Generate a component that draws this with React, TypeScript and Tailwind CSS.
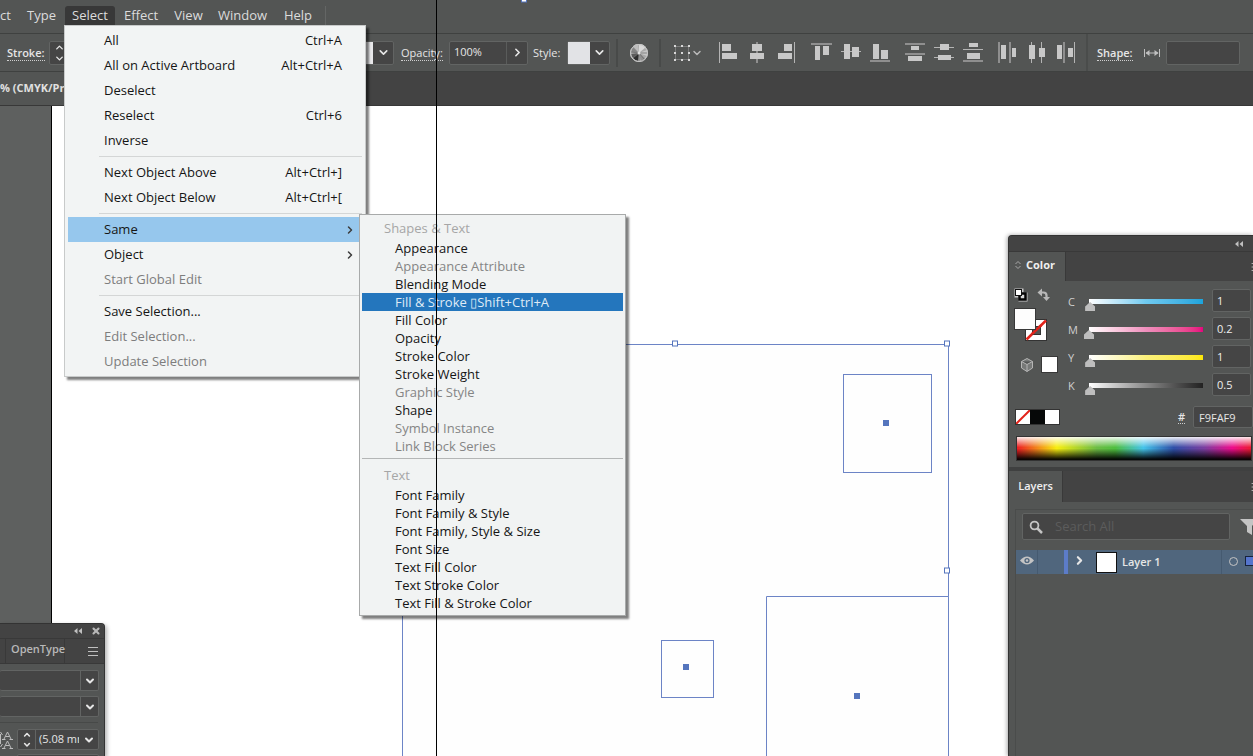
import React from "react";
import { ChevronDown, ChevronRight, ChevronUp, Menu, X } from "lucide-react";

type Rect = [number, number, number, number];

const alignGroups: { label: string; rects: Rect[] }[][] = [
  [
    { label: "Horizontal Align Left", rects: [[1, 0, 1, 21], [4, 2, 9, 7], [4, 11, 15, 6]] },
    { label: "Horizontal Align Center", rects: [[9, 0, 2, 21], [5, 2, 10, 7], [3, 11, 14, 6]] },
    { label: "Horizontal Align Right", rects: [[18, 0, 1, 21], [8, 2, 8, 7], [2, 11, 14, 6]] },
  ],
  [
    { label: "Vertical Align Top", rects: [[0, 1, 21, 2], [4, 4, 5, 14], [12, 4, 6, 9]] },
    { label: "Vertical Align Center", rects: [[1, 9, 20, 1], [4, 2, 6, 15], [12, 5, 7, 10]] },
    { label: "Vertical Align Bottom", rects: [[1, 18, 20, 2], [4, 2, 6, 15], [12, 8, 7, 9]] },
  ],
  [
    { label: "Vertical Distribute Top", rects: [[1, 1, 20, 2], [7, 4, 8, 4], [1, 11, 20, 2], [4, 14, 14, 5]] },
    { label: "Vertical Distribute Center", rects: [[1, 5, 20, 1], [7, 2, 9, 6], [1, 15, 20, 1], [5, 13, 13, 5]] },
    { label: "Vertical Distribute Bottom", rects: [[7, 1, 9, 4], [1, 7, 20, 1], [5, 11, 13, 6], [1, 18, 20, 2]] },
  ],
  [
    { label: "Horizontal Distribute Left", rects: [[1, 0, 2, 21], [4, 3, 5, 14], [12, 0, 2, 21], [15, 6, 4, 9]] },
    { label: "Horizontal Distribute Center", rects: [[5, 0, 1, 21], [3, 3, 6, 14], [15, 0, 1, 21], [13, 6, 6, 9]] },
    { label: "Horizontal Distribute Right", rects: [[2, 3, 5, 14], [8, 0, 2, 21], [13, 6, 5, 9], [19, 0, 1, 21]] },
  ],
];

type Item = { text: string; keys?: string; off?: boolean; sub?: boolean; active?: boolean };

const selectMenu: Item[][] = [
  [
    { text: "All", keys: "Ctrl+A" },
    { text: "All on Active Artboard", keys: "Alt+Ctrl+A" },
    { text: "Deselect" },
    { text: "Reselect", keys: "Ctrl+6" },
    { text: "Inverse" },
  ],
  [
    { text: "Next Object Above", keys: "Alt+Ctrl+]" },
    { text: "Next Object Below", keys: "Alt+Ctrl+[" },
  ],
  [
    { text: "Same", sub: true, active: true },
    { text: "Object", sub: true },
    { text: "Start Global Edit", off: true },
  ],
  [
    { text: "Save Selection..." },
    { text: "Edit Selection...", off: true },
    { text: "Update Selection", off: true },
  ],
];

const sameMenu: { title: string; items: Item[] }[] = [
  {
    title: "Shapes & Text",
    items: [
      { text: "Appearance" },
      { text: "Appearance Attribute", off: true },
      { text: "Blending Mode" },
      { text: "Fill & Stroke ▯Shift+Ctrl+A", active: true },
      { text: "Fill Color" },
      { text: "Opacity" },
      { text: "Stroke Color" },
      { text: "Stroke Weight" },
      { text: "Graphic Style", off: true },
      { text: "Shape" },
      { text: "Symbol Instance", off: true },
      { text: "Link Block Series", off: true },
    ],
  },
  {
    title: "Text",
    items: [
      { text: "Font Family" },
      { text: "Font Family & Style" },
      { text: "Font Family, Style & Size" },
      { text: "Font Size" },
      { text: "Text Fill Color" },
      { text: "Text Stroke Color" },
      { text: "Text Fill & Stroke Color" },
    ],
  },
];

const channels = [
  { name: "C", value: "1", pos: 1, track: "from-white via-[#6fcaf0] to-[#1ba4dc]" },
  { name: "M", value: "0.2", pos: 0, track: "from-white via-[#ee8fbd] to-[#e5007e]" },
  { name: "Y", value: "1", pos: 1, track: "from-white via-[#fbf07a] to-[#fce800]" },
  { name: "K", value: "0.5", pos: 1, track: "from-white via-[#8a8a8a] to-[#222222]" },
];

function MenuBar() {
  return (
    <nav className="flex h-[34px] shrink-0 items-start overflow-hidden border-b border-[#3f4140] bg-[#535554] pt-[6px] text-[13px] leading-[18px] text-[#dcdcdc]">
      <button className="w-[19px] text-left">ct</button>
      <button className="w-[45px]">Type</button>
      <button className="ml-px h-[28px] w-[50px] rounded-t-[3px] bg-[#383838] pb-[10px]">Select</button>
      <button className="w-[52px]">Effect</button>
      <button className="w-[43px]">View</button>
      <button className="w-[65px]">Window</button>
      <button className="w-[46px]">Help</button>
      <span className="ml-[4px] h-[26px] w-px bg-[#646665]" />
    </nav>
  );
}

const field = "rounded-[2px] border border-[#626463] bg-[#454545]";

function ControlBar() {
  return (
    <div className="flex h-[38px] shrink-0 items-center border-b border-[#3f4140] bg-[#535554] text-[11px] text-[#e6e6e6]">
      <div className="w-[49px] shrink-0 pl-[7px] pt-[2px]">
        <label htmlFor="stroke" className="border-b border-dotted border-[#cfcfcf] font-semibold leading-[14px]">Stroke:</label>
      </div>
      <div className="flex w-[301px] shrink-0">
        <div className={`${field} flex h-[24px]`}>
          <button aria-label="Change stroke weight" className="flex w-[18px] flex-col items-center justify-center">
            <ChevronUp size={13} strokeWidth={3} />
            <ChevronDown size={13} strokeWidth={3} />
          </button>
          <input id="stroke" className="w-[60px] bg-transparent px-1" defaultValue="" />
        </div>
      </div>
      <button aria-label="Brush definition" className={`${field} flex h-[24px] w-[44px] shrink-0 items-center`}>
        <span className="h-full w-[22px] bg-[#e8e8ea]" />
        <ChevronDown className="mx-auto" size={13} strokeWidth={3} />
      </button>
      <div className="w-[55px] shrink-0 pl-[7px] pt-[2px]">
        <label htmlFor="opacity" className="border-b border-dotted border-[#cfcfcf] font-medium leading-[14px]">Opacity:</label>
      </div>
      <div className={`${field} flex h-[24px] w-[79px] shrink-0`}>
        <input id="opacity" defaultValue="100%" className="w-[57px] border-r border-[#5a5c5b] bg-transparent pl-[4px] text-[11px] outline-none" />
        <button aria-label="Opacity slider" className="flex flex-1 items-center justify-center">
          <ChevronRight size={13} strokeWidth={3} />
        </button>
      </div>
      <span className="w-[39px] shrink-0 pl-[5px] pt-[2px]">Style:</span>
      <button aria-label="Graphic style" className={`${field} flex h-[24px] w-[43px] shrink-0 items-center`}>
        <span className="h-full w-[22px] bg-[#e2e3e6]" />
        <ChevronDown className="mx-auto" size={13} strokeWidth={3} />
      </button>
      <span className="ml-[6px] h-[28px] w-[2px] shrink-0 bg-[#484a49]" />
      <button aria-label="Recolor artwork" className="ml-[11px] shrink-0">
        <svg width="20" height="20" viewBox="0 0 20 20">
          <circle cx="10" cy="10" r="8.500" fill="#a9a9a9" stroke="#cdcdcd" />
          <path d="M10 10L10 1A9 9 0 0 1 17 4Z" fill="#d9d9d9" />
          <path d="M10 10L18 7A9 9 0 0 1 18 13Z" fill="#c6c6c6" />
          <path d="M10 10L17 16A9 9 0 0 1 12 19Z" fill="#8f8f8f" />
          <path d="M10 10L9 18A8 8 0 0 1 4 15Z" fill="#2e2e2e" />
          <path d="M10 10L4 15A8 8 0 0 1 2 11Z" fill="#5b5b5b" />
          <path d="M10 10L2 9A8 8 0 0 1 4 4Z" fill="#858585" />
          <path d="M10 10L4 3A9 9 0 0 1 9 1Z" fill="#bdbdbd" />
          <path d="M10 10V18M10 10L15 16M10 10H18M10 10L4 15M10 10L2 9" stroke="#666" strokeWidth=".7" />
          <circle cx="10" cy="10" r="8.500" fill="none" stroke="#c2c2c2" />
          <circle cx="10" cy="10" r="1.500" fill="#e2e2e2" />
        </svg>
      </button>
      <span className="ml-[10px] h-[28px] w-[2px] shrink-0 bg-[#484a49]" />
      <button aria-label="Transform" className="ml-[12px] flex shrink-0 items-center">
        <svg width="18" height="18" viewBox="0 0 18 18">
          <rect x="2.500" y="2.500" width="13" height="13" fill="none" stroke="#a5a5a5" strokeDasharray="1 1" />
          <path d="M1 1h2v2H1zM8 1h2v2H8zM15 1h2v2h-2zM1 8h2v2H1zM15 8h2v2h-2zM1 15h2v2H1zM8 15h2v2H8zM15 15h2v2h-2zM8 8h2v2H8z" fill="#d8d8d8" />
        </svg>
        <ChevronDown size={12} strokeWidth={3} color="#b8b8b8" />
      </button>
      <div className="ml-[15px] flex shrink-0 gap-[13px]">
        {alignGroups.map((group, i) => (
          <div key={i} className="flex gap-[7px]">
            {group.map((icon) => (
              <button key={icon.label} aria-label={icon.label}>
                <svg width="22" height="22" viewBox="0 0 22 22" className="block">
                  {icon.rects.map(([x, y, w, h], n) => (
                    <rect key={n} x={x} y={y} width={w} height={h} fill={w === 2 || h === 2 ? "#8f8f8f" : w < 3 || h < 3 ? "#b4b4b4" : "#c8c8c8"} />
                  ))}
                </svg>
              </button>
            ))}
          </div>
        ))}
      </div>
      <span className="ml-[9px] h-full w-[2px] shrink-0 bg-[#4a4c4b]" />
      <div className="w-[55px] shrink-0 pl-[9px] pt-[2px]">
        <label htmlFor="shape" className="border-b border-dotted border-[#cfcfcf] font-semibold leading-[14px]">Shape:</label>
      </div>
      <svg width="18" height="12" viewBox="0 0 18 12" className="mr-[5px] shrink-0">
        <path d="M1.500 2v8M16.500 2v8M3 6h12" fill="none" stroke="#c0c0c0" />
        <path d="M2.500 6l4-3v6zM15.500 6l-4-3v6z" fill="#c0c0c0" />
      </svg>
      <input id="shape" className={`${field} h-[24px] w-[74px] shrink-0 px-1 outline-none`} />
    </div>
  );
}

function SelectMenu() {
  return (
    <div role="menu" className="absolute left-[64px] top-[25px] w-[302px] border border-[#c8caca] bg-[#f2f4f4] px-[3px] py-[2px] text-[13px] leading-[25px] text-[#151515] shadow-[3px_3px_2px_rgba(0,0,0,0.5)]">
      {selectMenu.map((group, i) => (
        <div key={i} className="flex flex-col">
          {i > 0 && <hr className="my-[3px] ml-[31px] border-[#d4d6d6]" />}
          {group.map((item) => (
            <button
              key={item.text}
              role="menuitem"
              disabled={item.off}
              className={`flex h-[25px] items-center justify-between pl-[36px] ${item.sub ? "pr-[6px]" : "pr-[20px]"} ${item.active ? "bg-[#96c7ed]" : ""} ${item.off ? "text-[#7d7d7d]" : ""}`}
            >
              <span>{item.text}</span>
              {item.keys && <span>{item.keys}</span>}
              {item.sub && <ChevronRight size={12} strokeWidth={3} color="#3c3c3c" />}
            </button>
          ))}
        </div>
      ))}
    </div>
  );
}

function SameMenu() {
  return (
    <div role="menu" className="absolute left-[359px] top-[214px] w-[267px] border border-[#a8aaaa] bg-[#f1f3f3] px-[2px] pb-[3px] pt-[4px] text-[13px] leading-[18px] text-[#151515] shadow-[3px_3px_2px_rgba(0,0,0,0.5)]">
      {sameMenu.map((group, i) => (
        <div key={group.title} className="flex flex-col">
          {i > 0 && <hr className="mb-[7px] mt-[3px] border-[#b4b6b6]" />}
          <span className="mb-[2px] pl-[22px] text-[#a6a6a6]">{group.title}</span>
          {group.items.map((item) => (
            <button
              key={item.text}
              role="menuitem"
              disabled={item.off}
              className={`h-[18px] pl-[33px] text-left ${item.active ? "bg-[#2476bd] text-[#dfeaf6]" : ""} ${item.off ? "text-[#858585]" : ""}`}
            >
              {item.text}
            </button>
          ))}
        </div>
      ))}
    </div>
  );
}

function Artwork() {
  const handles = [[524.5, -0.5], [675.5, 343.5], [947.5, 343.5], [947.5, 570.5]];
  const centers = [[886, 423], [857, 696], [686, 667]];
  return (
    <svg className="absolute inset-0 h-full w-full" aria-label="Artboard selection">
      <g fill="#fefefe" stroke="#6c84c6" strokeWidth="1">
        <path d="M402.500 800V344.500H948.500V800" />
        <rect x="843.500" y="374.500" width="88" height="98" />
        <path d="M766.500 800V596.500H948.500V800" />
        <rect x="661.500" y="640.500" width="52" height="57" />
      </g>
      {handles.map(([x, y]) => (
        <rect key={`${x}-${y}`} x={x - 3} y={y - 3} width="5" height="5" transform="translate(0 .5)" fill="#fff" stroke="#5575bd" />
      ))}
      {centers.map(([x, y]) => (
        <rect key={`${x}-${y}`} x={x - 3} y={y - 3} width="6" height="6" fill="#5575bd" />
      ))}
    </svg>
  );
}

function CollapseIcon() {
  return (
    <svg width="8" height="6" viewBox="0 0 8 6">
      <path d="M3.500 0v6L0 3zM8 0v6L4.500 3z" fill="#c0c0c0" />
    </svg>
  );
}

function ColorPanel() {
  return (
    <section className="flex flex-col">
      <div className="flex h-[30px] items-stretch border-t border-[#393939] bg-[#434343]">
        <h2 className="flex w-[57px] items-center gap-[4px] border-r border-[#393939] bg-[#535554] pb-[3px] pl-[5px] text-[11px] font-bold text-[#efefef]">
          <svg width="8" height="10" viewBox="0 0 8 10">
            <path d="M1.500 4L4 1.500L6.500 4M1.500 6L4 8.500L6.500 6" fill="none" stroke="#a8a8a8" />
          </svg>
          Color
        </h2>
        <button aria-label="Color panel menu" className="ml-auto flex items-center">
          <Menu size={12} color="#b0b0b0" className="-mr-[9px]" />
        </button>
      </div>
      <div className="flex pl-[5px] pt-[7px]">
        <div className="flex w-[49px] shrink-0 flex-col">
          <div className="flex gap-[8px]">
            <button aria-label="Default fill and stroke">
              <svg width="15" height="14" viewBox="0 0 15 14" className="block">
                <path d="M.500 .500h9v4h4v9h-9v-4h-4z" fill="#c9c9c9" />
                <path d="M5.500 5.500h6v6h-6z" fill="#d8d8d8" stroke="#050505" strokeWidth="2.500" />
                <rect x="1.500" y="1.500" width="6" height="6" fill="#fff" stroke="#111" />
              </svg>
            </button>
            <button aria-label="Swap fill and stroke">
              <svg width="14" height="14" viewBox="0 0 14 14" className="block">
                <path d="M4 4.500h2.500q3 0 3 3v2" fill="none" stroke="#b8b8b8" strokeWidth="2.200" />
                <path d="M.500 4.500l4.500-4v8zM6 9h7L9.500 13z" fill="#b8b8b8" />
              </svg>
            </button>
          </div>
          <svg width="34" height="34" viewBox="0 0 34 34" className="mt-[6px] block" role="img" aria-label="Fill white, no stroke">
            <rect x="11.500" y="11.500" width="21" height="21" fill="#fff" stroke="#333" />
            <path d="M12.500 31.500L32 12.500" stroke="#e2231a" strokeWidth="2.500" />
            <rect x="18.500" y="18.500" width="8" height="8" fill="#535554" stroke="#333" />
            <path d="M18 26.200L27 17.400" stroke="#e2231a" strokeWidth="2.500" />
            <rect x=".500" y=".500" width="21" height="21" fill="#fdfdfd" stroke="#383838" />
          </svg>
          <div className="mt-[14px] flex items-center gap-[7px] pl-[6px]">
            <svg width="14" height="16" viewBox="0 0 14 16">
              <path d="M7 1.500l5.500 3v6.500L7 14.500l-5.500-3.500V4.500zM1.500 4.500L7 7.500L12.500 4.500M7 7.500V14.500" fill="#777978" stroke="#b5b5b5" strokeLinejoin="round" />
            </svg>
            <span className="h-[17px] w-[17px] shrink-0 border border-[#383838] bg-white" />
          </div>
        </div>
        <div className="flex flex-1 flex-col gap-[5px] pt-px">
          {channels.map((c) => (
            <div key={c.name} className="flex h-[23px] items-center">
              <label htmlFor={`slider-${c.name}`} className="w-[21px] pl-[5px] pt-[4px] text-[11px] text-[#cfcfcf]">{c.name}</label>
              <input
                id={`slider-${c.name}`}
                type="range"
                min={0}
                max={100}
                defaultValue={c.pos}
                className={`mt-[9px] block h-[14px] w-[124px] shrink-0 appearance-none bg-linear-to-r bg-[length:114px_5px] bg-[position:5px_1px] bg-no-repeat ${c.track} [&::-webkit-slider-runnable-track]:h-[14px] [&::-webkit-slider-thumb]:mt-[4px] [&::-webkit-slider-thumb]:h-[9px] [&::-webkit-slider-thumb]:w-[10px] [&::-webkit-slider-thumb]:appearance-none [&::-webkit-slider-thumb]:bg-[#bebebe] [&::-webkit-slider-thumb]:[clip-path:polygon(50%_0,100%_50%,100%_100%,0_100%,0_50%)]`}
              />
              <input aria-label={`${c.name} value`} defaultValue={c.value} className={`${field} ml-[4px] h-[23px] w-[39px] pl-[4px] text-[11px] text-[#efefef] outline-none`} />
            </div>
          ))}
        </div>
      </div>
      <div className="mt-[10px] flex h-[22px] items-center pl-[6px]">
        <div className="flex h-[16px] shrink-0 border border-[#333]">
          <svg width="14" height="14" viewBox="0 0 14 14">
            <rect width="14" height="14" fill="#fff" />
            <path d="M0 14L14 0" stroke="#e2231a" strokeWidth="2" />
          </svg>
          <span className="w-[15px] bg-[#060808]" />
          <span className="w-[14px] bg-white" />
        </div>
        <label htmlFor="hex" className="ml-auto mr-[8px] border-b border-dotted border-[#cfcfcf] text-[11px] font-semibold leading-[13px] text-[#e6e6e6]">#</label>
        <input id="hex" defaultValue="F9FAF9" className={`${field} h-[22px] w-[60px] pl-[5px] text-[11px] text-[#e6e6e6] outline-none`} />
      </div>
      <div className="mb-[6px] ml-[7px] mr-px mt-[8px] h-[25px] border border-[#333] bg-[linear-gradient(to_bottom,rgba(255,255,255,0.9),rgba(255,255,255,0)_45%,rgba(0,0,0,0)_50%,rgba(0,0,0,0.95)_96%),linear-gradient(to_right,#ec1c24,#f7ee10_17%,#6dbd45_34%,#4fbf3f_42%,#45c4ea_54%,#2f4fa8_67%,#7a3fa0_80%,#ed0c8c_92%,#ec1c30)]" />
    </section>
  );
}

function LayersPanel() {
  return (
    <section className="flex flex-1 flex-col border-t-4 border-[#3f4040]">
      <div className="flex h-[31px] bg-[#434343]">
        <h2 className="flex w-[54px] items-center justify-center border-r border-[#393939] bg-[#535554] text-[11px] font-semibold text-[#efefef]">Layers</h2>
        <button aria-label="Layers panel menu" className="ml-auto flex items-center">
          <Menu size={12} color="#b0b0b0" className="-mr-[9px]" />
        </button>
      </div>
      <div className="ml-[6px] mt-[7px] flex flex-1 flex-col border-l border-t border-[#4a4c4b]">
        <div className="flex items-center py-[3px] pl-[6px]">
          <div className={`${field} flex h-[27px] w-[208px] shrink-0 items-center`}>
            <svg width="14" height="14" viewBox="0 0 14 14" className="ml-[6px]">
              <circle cx="5.500" cy="5.500" r="3.900" fill="none" stroke="#c4c4c4" strokeWidth="1.800" />
              <path d="M8.500 8.500L13 13" stroke="#c4c4c4" strokeWidth="2.500" />
            </svg>
            <input aria-label="Search layers" placeholder="Search All" className="min-w-0 flex-1 bg-transparent pl-[12px] text-[13px] outline-none placeholder:text-[#5c5c5c]" />
          </div>
          <button aria-label="Filter" className="ml-[10px] shrink-0">
            <svg width="18" height="18" viewBox="0 0 18 18" className="block">
              <path d="M0 1h18l-6 7v9l-5-3V8z" fill="#c4c4c4" />
            </svg>
          </button>
        </div>
        <div className="mt-[7px] flex h-[24px] items-stretch bg-[#50667d] text-[11px] text-[#e6e6e6]">
          <button aria-label="Toggle visibility" className="flex w-[22px] items-center justify-center border-r border-[#455a70] pb-[3px]">
            <svg width="14" height="9" viewBox="0 0 14 9">
              <path d="M0 4.500Q7-3.500 14 4.500Q7 12.500 0 4.500z" fill="#c4c4c4" />
              <circle cx="7" cy="4.500" r="2.600" fill="#50667d" />
              <circle cx="7" cy="4.500" r="1.200" fill="#c4c4c4" />
            </svg>
          </button>
          <span className="ml-[26px] w-[4px] bg-[#5c7cc8]" />
          <button aria-label="Expand layer" className="flex w-[23px] items-center justify-center pb-[3px]">
            <ChevronRight size={13} strokeWidth={4} />
          </button>
          <span className="ml-[5px] h-[21px] w-[21px] self-center border border-[#111] bg-white" />
          <span className="flex flex-1 items-center pl-[5px] font-semibold">Layer 1</span>
          <span className="flex w-[32px] items-center gap-[7px] border-l border-[#455a70] pb-[2px] pl-[7px]">
            <span className="h-[9px] w-[9px] shrink-0 rounded-full border border-[#c4c4c4]" />
            <span className="h-[10px] w-[10px] shrink-0 border border-[#16233c] bg-[#5575cd]" />
          </span>
        </div>
      </div>
    </section>
  );
}

function CharacterPanel() {
  return (
    <aside className="absolute bottom-0 left-0 flex h-[133px] w-[105px] flex-col overflow-hidden rounded-tr-[4px] border-r border-t border-[#333] bg-[#535554] text-[11px] text-[#e6e6e6] shadow-[2px_2px_4px_rgba(0,0,0,0.3)]">
      <div className="flex h-[14px] shrink-0 items-center justify-end gap-[9px] bg-[#434343] pr-[3px]">
        <CollapseIcon />
        <X size={10} strokeWidth={5} color="#b8b8b8" />
      </div>
      <div className="flex h-[26px] shrink-0 items-stretch border-y border-[#393939] bg-[#434343]">
        <button className="ml-[5px] w-[60px] border-x border-[#393939] pb-[3px] pl-[5px] text-center font-semibold text-[#b8b8b8]">OpenType</button>
        <button aria-label="Panel menu" className="ml-[22px] flex items-center">
          <svg width="12" height="9" viewBox="0 0 12 9"><path d="M1 .500h10M1 4.500h10M1 8.500h10" stroke="#c0c0c0" /></svg>
        </button>
      </div>
      <div className="flex flex-col gap-[5px] pt-[6px]">
        {["Font family", "Font style"].map((name) => (
          <button key={name} aria-label={name} className={`${field} flex h-[21px] w-[99px] justify-end border-l-0`}>
            <span className="flex h-full w-[18px] items-center justify-center border-l border-[#626463]">
              <ChevronDown size={12} strokeWidth={4} />
            </span>
          </button>
        ))}
      </div>
      <hr className="mr-[6px] mt-[5px] border-[#474948]" />
      <div className="mt-[6px] flex shrink-0 items-center">
        <svg width="17" height="18" viewBox="0 0 17 18" className="shrink-0">
          <path d="M4 8L7.500 1L11 8M5.500 5.500h4M2 8.500h3.500M9.500 8.500h3.500M4 17L7.500 10L11 17M5.500 14.500h4M2 17.500h3.500M9.500 17.500h3.500M.500 3v10M.500 1l2 3M.500 16l2-3" fill="none" stroke="#bcbcbc" />
        </svg>
        <div className={`${field} flex h-[21px] w-[82px]`}>
          <button aria-label="Change leading" className="flex w-[18px] shrink-0 flex-col items-center justify-center border-r border-[#626463]">
            <ChevronUp size={10} strokeWidth={4} />
            <ChevronDown size={10} strokeWidth={4} />
          </button>
          <input aria-label="Leading" defaultValue="(5.08 mm)" className="w-[43px] shrink-0 bg-transparent pl-[3px] text-[11px] outline-none" />
          <button aria-label="Leading options" className="flex flex-1 items-center justify-center">
            <ChevronDown size={12} strokeWidth={4} />
          </button>
        </div>
      </div>
      <div className="ml-[17px] mt-[4px] h-[21px] w-[82px] shrink-0 rounded-[2px] border border-[#626463] bg-[#454545]" />
    </aside>
  );
}

export default function App() {
  return (
    <div className="relative flex h-screen flex-col overflow-hidden bg-white font-['Open_Sans','Noto_Sans',sans-serif]">
      <MenuBar />
      <ControlBar />
      <div className="flex h-[34px] shrink-0 items-center border-b border-[#383838] bg-[#434343] text-[11px] font-bold text-[#e0e0e0]">
        <button className="h-full w-[220px] bg-[#535554] text-left">% (CMYK/Preview)</button>
      </div>
      <main className="flex flex-1">
        <div className="w-[52px] border-r border-black bg-[#5e605f]" />
      </main>
      <Artwork />
      <aside className="absolute bottom-0 right-0 top-[235px] flex w-[245px] flex-col overflow-hidden rounded-tl-[4px] border-l border-t border-[#333] bg-[#535554] shadow-[-1px_0px_4px_rgba(0,0,0,0.35)]">
        <div className="flex h-[15px] shrink-0 items-center justify-end bg-[#434343] pr-[10px]">
          <CollapseIcon />
        </div>
        <ColorPanel />
        <LayersPanel />
      </aside>
      <CharacterPanel />
      <SelectMenu />
      <SameMenu />
      <div className="pointer-events-none absolute inset-y-0 left-[436px] w-px bg-black" />
    </div>
  );
}
